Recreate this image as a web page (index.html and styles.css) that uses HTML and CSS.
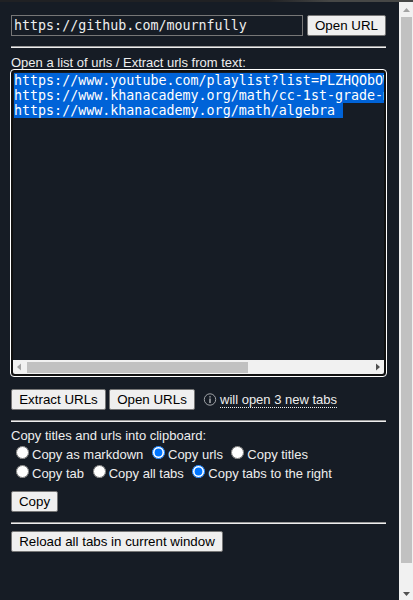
FILE: index.html
```html
<!DOCTYPE html>
<html lang="en">
<head>
<meta charset="utf-8">
<title>Open URLs</title>
<link rel="stylesheet" href="styles.css">
</head>
<body>
<div class="window-edge"></div>
<div class="popup">
  <main class="content">
    <div class="row url-row">
      <div class="url-input">https://github.com/mournfully</div>
      <button class="btn btn-open">Open URL</button>
    </div>
    <div class="rule"></div>
    <div class="label list-label">Open a list of urls / Extract urls from text:</div>
    <div class="url-list">
      <div class="url-text"><div class="line"><span>https://www.youtube.com/playlist?list=PLZHQObOW</span></div><div class="line"><span>https://www.khanacademy.org/math/cc-1st-grade-m</span></div><div class="line"><span>https://www.khanacademy.org/math/algebra </span></div></div>
      <div class="hscroll">
        <svg class="arrow" width="14" height="14"><path d="M8 3.5v7L4 7z" fill="#a3a3a3"/></svg>
        <div class="hthumb"></div>
        <svg class="arrow" width="14" height="14"><path d="M6 3.5v7L10 7z" fill="#505050"/></svg>
      </div>
    </div>
    <div class="row actions">
      <button class="btn btn-extract">Extract URLs</button>
      <button class="btn btn-urls">Open URLs</button>
      <svg class="info" width="14" height="14" viewBox="0 0 14 14"><circle cx="7" cy="6.5" r="5.7" fill="none" stroke="#a0a3a7"/><path d="M7 5.5v4.5M7 3.2v1.3" fill="none" stroke="#a0a3a7" stroke-width="1.6"/></svg>
      <span class="hint">will open 3 new tabs</span>
    </div>
    <div class="rule"></div>
    <div class="label copy-label">Copy titles and urls into clipboard:</div>
    <div class="radios">
      <label class="opt w-markdown"><input type="radio" name="format">Copy as markdown</label>
      <label class="opt w-urls"><input type="radio" name="format" checked>Copy urls</label>
      <label class="opt"><input type="radio" name="format">Copy titles</label>
    </div>
    <div class="radios">
      <label class="opt w-tab"><input type="radio" name="scope">Copy tab</label>
      <label class="opt w-all"><input type="radio" name="scope">Copy all tabs</label>
      <label class="opt"><input type="radio" name="scope" checked>Copy tabs to the right</label>
    </div>
    <div class="row copy-row"><button class="btn btn-copy">Copy</button></div>
    <div class="rule"></div>
    <div class="row reload-row"><button class="btn btn-reload">Reload all tabs in current window</button></div>
  </main>
  <div class="vscroll">
    <svg width="14" height="15"><path d="M4 10h7L7.5 6z" fill="#a3a3a3"/></svg>
    <div class="vthumb"></div>
    <svg width="14" height="15"><path d="M4 7h7L7.5 11z" fill="#505050"/></svg>
  </div>
</div>
</body>
</html>
```
FILE: styles.css
```css
* { box-sizing: border-box; }

body {
  margin: 0;
  height: 600px;
  overflow: hidden;
  background: #161c25;
  color: #eeeeee;
  font: 13.333px/15px "Liberation Sans", Arial, sans-serif;
}

.window-edge {
  height: 2px;
  background: linear-gradient(90deg, #202124 0%, #202124 65%, #464746 80%, #464746 100%);
}

.popup { display: flex; height: 598px; }

.content { width: 399px; padding: 13px 13px 0 11px; }

.row { display: flex; height: 21px; }

.url-row { gap: 4px; }

.url-input {
  width: 292px;
  padding: 2px;
  border: 1px solid #767676;
  font: 13.333px/15px "DejaVu Sans Mono", monospace;
  white-space: nowrap;
}

.btn {
  height: 21px;
  padding: 0;
  border: 1px solid #767676;
  border-radius: 2px;
  background: #efefef;
  color: #000;
  font: 13.333px/15px "Liberation Sans", Arial, sans-serif;
  white-space: nowrap;
}
.btn-open { width: 79px; }
.btn-extract { width: 95px; }
.btn-urls { width: 86px; margin-left: 3px; }
.btn-copy { width: 47px; }
.btn-reload { width: 212px; }

.rule {
  height: 2px;
  margin-top: 10px;
  border-top: 1px solid #9a9a9a;
  background: #eeeeee;
}

.label { height: 15px; font-size: 13px; }
.list-label { margin-top: 7px; }

.url-list {
  display: flex;
  flex-direction: column;
  height: 308px;
  margin: -1px -1px 0;
  padding: 2px;
  border: 1.5px solid #fff;
  border-radius: 4px;
  box-shadow: inset 0 0 0 2px #101010;
}

.url-text {
  flex: 1;
  overflow: hidden;
  padding: 1px 0 0 1px;
  font: 13.333px/15px "DejaVu Sans Mono", monospace;
  white-space: pre;
  color: #fff;
}
.line { height: 15px; }
.line span { display: inline-block; height: 15px; background: #0063d8; }
.line:last-child span { width: 329px; }

.hscroll { display: flex; height: 14px; background: #f1f1f1; border-radius: 0 0 2px 2px; }
.hthumb { flex: none; width: 221px; height: 11px; margin: 2px auto 0 0; background: #c1c1c1; }
.arrow { flex: none; }

.actions { margin-top: 12px; }
.info { margin: 4px 0 0 8px; }
.hint {
  height: 16px;
  margin: 3px 0 0 3px;
  border-bottom: 1px dotted #eeeeee;
  font-size: 13px;
}

.copy-label { margin-top: 6px; }

.radios { display: flex; height: 19px; padding-left: 5px; font-size: 13px; }
.opt { display: flex; line-height: 15px; padding-top: 4px; white-space: nowrap; }
.opt input { width: 13px; height: 13px; margin: -1px 3px 0 0; }
.w-markdown { width: 136px; }
.w-urls { width: 79.3px; }
.w-tab { width: 76.7px; }
.w-all { width: 99.6px; }

.copy-row { margin-top: 10px; }
.reload-row { margin-top: 7px; }

.vscroll { display: flex; flex-direction: column; width: 14px; background: #f1f1f1; }
.vthumb { width: 11px; height: 546px; margin: 0 0 22px 2px; background: #c1c1c1; }
```
